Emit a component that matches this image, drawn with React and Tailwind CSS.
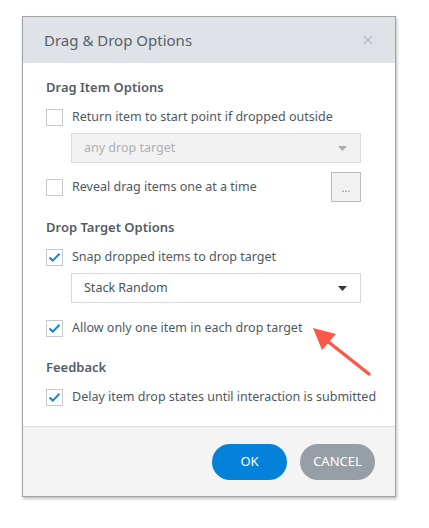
import React from "react";

const font = { fontFamily: '"Noto Sans", "Open Sans", sans-serif' };

function Check({ checked, label }) {
  return (
    <div className="flex items-center h-5">
      <span className="flex items-center justify-center w-[17px] h-[17px] border border-[#c3cad1] bg-white shrink-0">
        {checked && (
          <svg width="13" height="11" viewBox="0 0 13 11">
            <path d="M1.5 5.5 L4.8 8.6 L11.5 1.8" fill="none" stroke="#1b82d4" strokeWidth="2" />
          </svg>
        )}
      </span>
      <span className="ml-[9px] text-[12.5px] text-[#4f5963] whitespace-nowrap">{label}</span>
    </div>
  );
}

function Select({ value, disabled }) {
  return (
    <div
      className={`ml-[25px] w-[290px] h-[30px] flex items-center justify-between pl-[12px] pr-[13px] border ${
        disabled ? "bg-[#f2f2f2] border-[#d9dde1] text-[#acb1b5]" : "bg-white border-[#d6dade] text-[#4a545e]"
      } text-[12.5px]`}
    >
      <span>{value}</span>
      <svg width="9" height="5" viewBox="0 0 9 5">
        <path d="M0 0 L9 0 L4.5 5 Z" fill={disabled ? "#a8acb0" : "#333"} />
      </svg>
    </div>
  );
}

export default function App() {
  return (
    <div className="relative w-[429px] h-[528px] bg-white" style={font}>
      <div className="absolute left-[22px] top-[16px] w-[374px] border border-[#a3a3a3] shadow-[1px_2px_3px_rgba(0,0,0,0.25)] bg-white">
        <div className="h-[46px] bg-[#dfe3e7] flex items-center justify-between pl-[21px] pr-[22px]">
          <span className="text-[15px] text-[#56616c]">Drag &amp; Drop Options</span>
          <svg width="10" height="10" viewBox="0 0 10 10">
            <path d="M1 1 L9 9 M9 1 L1 9" stroke="#c3c8cd" strokeWidth="2" />
          </svg>
        </div>
        <div className="pl-[23px] pr-[20px] pt-[15px] pb-[19px]">
          <div className="h-5 flex items-center text-[13px] font-semibold text-[#545d66]">Drag Item Options</div>
          <div className="mt-[9px]">
            <Check label="Return item to start point if dropped outside" />
          </div>
          <div className="mt-[6px]">
            <Select value="any drop target" disabled />
          </div>
          <div className="mt-[9px] flex items-center justify-between h-[30px] w-[315px]">
            <Check label="Reveal drag items one at a time" />
            <div className="w-[30px] h-[30px] bg-[#f1f1f1] border border-[#bcbcbc] flex items-center justify-center text-[11px] text-[#8790a0] leading-none">
              ...
            </div>
          </div>
          <div className="mt-[16px] h-5 flex items-center text-[13px] font-semibold text-[#545d66]">Drop Target Options</div>
          <div className="mt-[9px]">
            <Check checked label="Snap dropped items to drop target" />
          </div>
          <div className="mt-[6px]">
            <Select value="Stack Random" />
          </div>
          <div className="mt-[15px]">
            <Check checked label="Allow only one item in each drop target" />
          </div>
          <div className="mt-[20px] h-5 flex items-center text-[13px] font-semibold text-[#545d66]">Feedback</div>
          <div className="mt-[9px]">
            <Check checked label="Delay item drop states until interaction is submitted" />
          </div>
        </div>
        <div className="border-t border-[#e0e0e0] bg-[#f4f4f4] h-[70px] flex items-start justify-end gap-[13px] pt-[17px] pr-[20px]">
          <button className="w-[75px] h-[36px] rounded-full bg-[#0482d9] text-white text-[13px]">OK</button>
          <button className="w-[75px] h-[36px] rounded-full bg-[#979fa6] text-white text-[13px]">CANCEL</button>
        </div>
      </div>
      <svg className="absolute left-0 top-0" width="429" height="528" viewBox="0 0 429 528">
        <path d="M369 374 L326 340" stroke="#fa5848" strokeWidth="3.5" strokeLinecap="round" />
        <path d="M313 328 L336 334 L322 350 Z" fill="#fa5848" />
      </svg>
    </div>
  );
}
